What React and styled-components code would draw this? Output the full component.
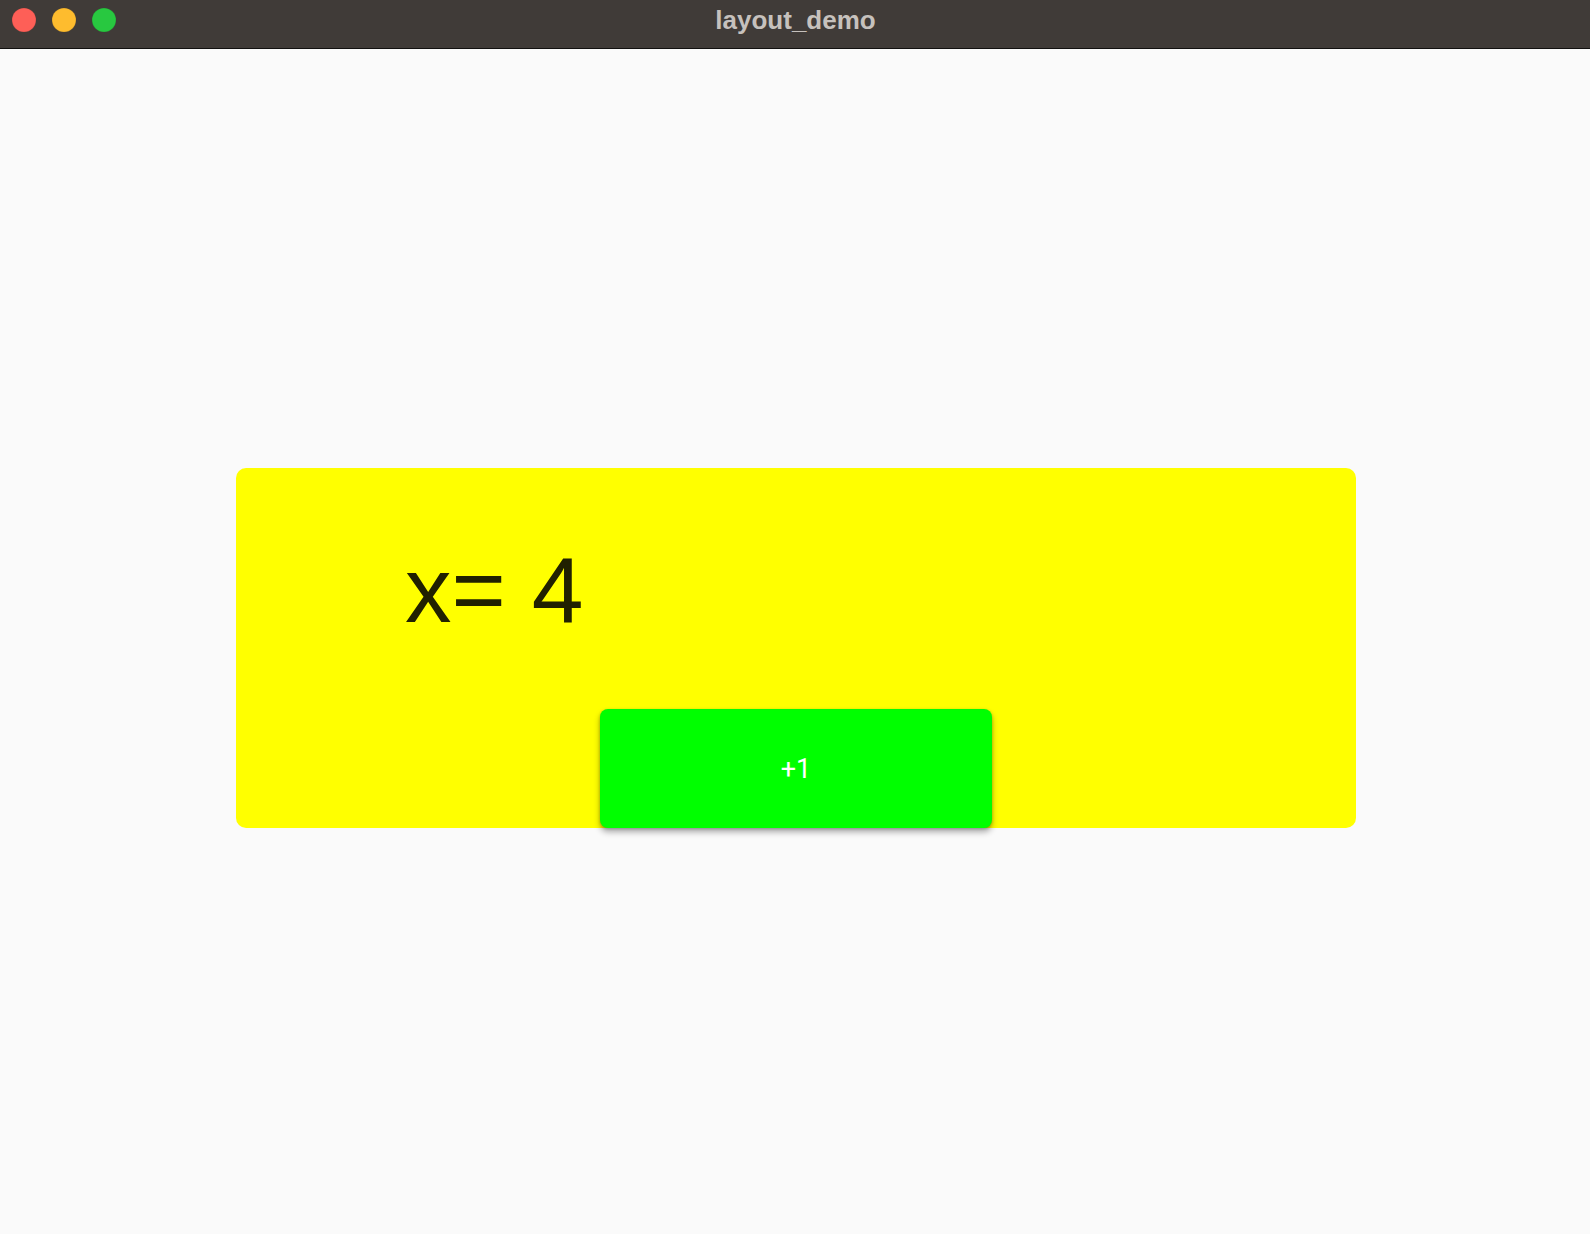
import React, { useState } from "react";
import styled, { createGlobalStyle } from "styled-components";

const Global = createGlobalStyle`
  html, body { margin: 0; padding: 0; background: #fafafa; }
  body { font-family: "Liberation Sans", Arial, sans-serif; }
  * { box-sizing: border-box; }
`;

const Window = styled.div`
  width: 1590px;
  height: 1234px;
  display: flex;
  flex-direction: column;
  background: #fafafa;
  overflow: hidden;
`;

const TitleBar = styled.div`
  height: 49px;
  flex: none;
  display: flex;
  align-items: flex-start;
  position: relative;
  background: #403b38;
  border-bottom: 1px solid #121110;
`;

const Lights = styled.div`
  display: flex;
  gap: 16px;
  padding-left: 12px;
  padding-top: 8px;
`;

const Light = styled.span`
  width: 24px;
  height: 24px;
  border-radius: 50%;
  background: ${(p) => p.$color};
  box-shadow: inset 0 0 0 0.5px rgba(0, 0, 0, 0.12);
`;

const Title = styled.div`
  position: absolute;
  left: 0;
  right: 0;
  top: 0;
  height: 40px;
  display: flex;
  align-items: center;
  justify-content: center;
  padding-left: 1px;
  font-family: "Liberation Sans", Arial, sans-serif;
  font-weight: 700;
  font-size: 26px;
  color: #c6c1bd;
  pointer-events: none;
`;

const Content = styled.main`
  flex: 1;
  display: flex;
  flex-direction: column;
  align-items: center;
  padding-top: 419px;
  padding-left: 2px;
`;

const Card = styled.section`
  width: 1120px;
  height: 360px;
  background: #ffff00;
  border-radius: 10px;
  display: flex;
  flex-direction: column;
`;

const Counter = styled.div`
  margin-top: 76px;
  padding-left: 169px;
  font-family: "Liberation Sans", Arial, sans-serif;
  font-size: 93px;
  line-height: 93px;
  color: #212100;
  white-space: pre;
`;

const PlusButton = styled.button`
  margin-top: auto;
  align-self: center;
  width: 392px;
  height: 119px;
  border: none;
  border-radius: 8px;
  background: #00ff00;
  color: #ffffff;
  font-family: Roboto, "Liberation Sans", sans-serif;
  font-size: 27px;
  cursor: pointer;
  box-shadow: 0 4px 6px rgba(0, 0, 0, 0.32), 0 1px 3px rgba(0, 0, 0, 0.2);
  padding: 0;
`;

export default function App() {
  const [x, setX] = useState(4);
  return (
    <Window>
      <Global />
      <TitleBar>
        <Lights>
          <Light $color="#fe5f57" />
          <Light $color="#febc2e" />
          <Light $color="#28c840" />
        </Lights>
        <Title>layout_demo</Title>
      </TitleBar>
      <Content>
        <Card>
          <Counter>{`x= ${x}`}</Counter>
          <PlusButton onClick={() => setX(x + 1)}>+1</PlusButton>
        </Card>
      </Content>
    </Window>
  );
}
